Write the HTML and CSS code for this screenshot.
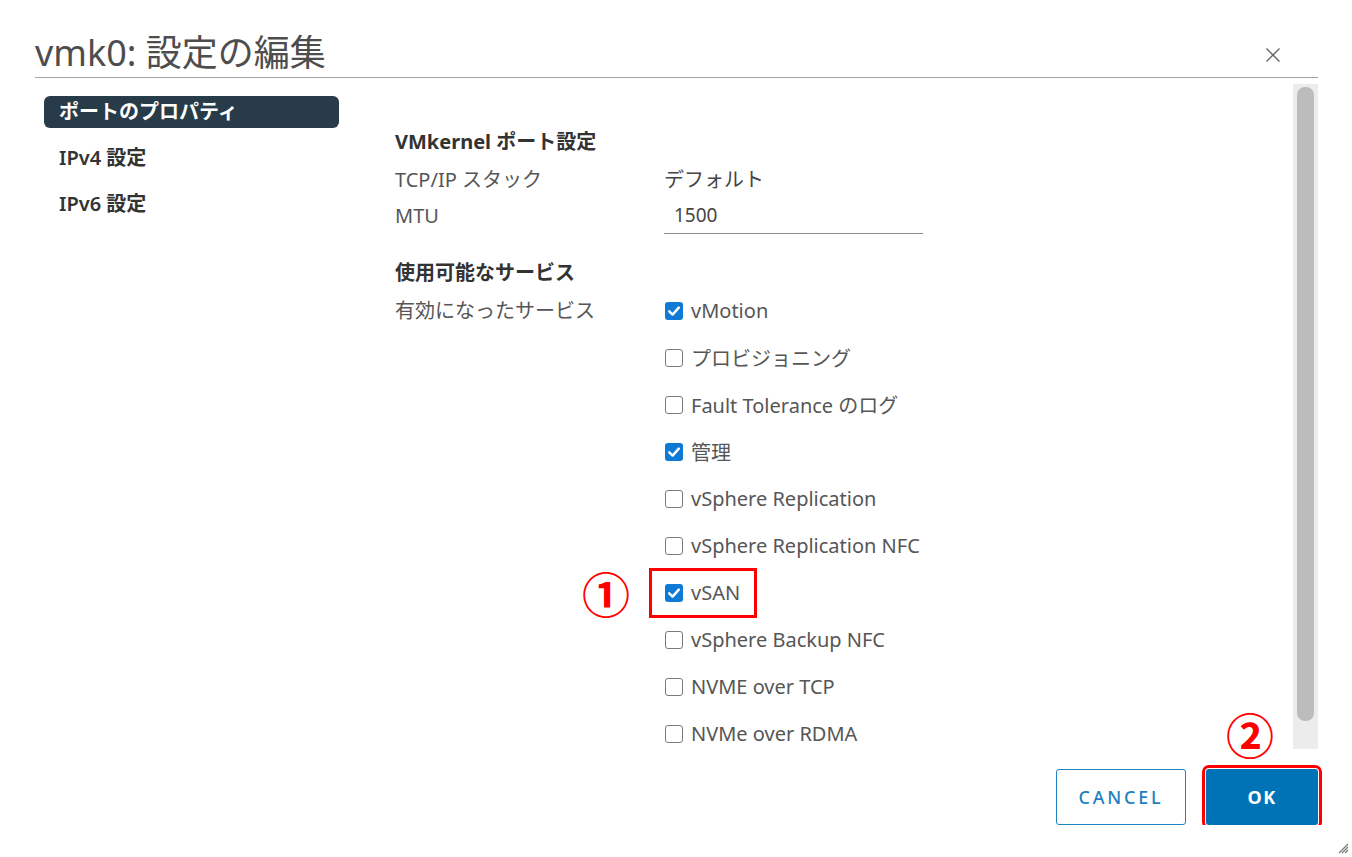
FILE: index.html
```html
<!DOCTYPE html>
<html>
    <head>
        <meta charset="utf-8">
        <link rel="stylesheet" href="styles.css">
    </head>
    <body>
        <div class="dialog">
            <header class="dlg-head">
                <h1 class="dlg-title">vmk0: 設定の編集</h1>
                <button class="close-btn" title="close">
                    <svg width="16" height="16" viewBox="0 0 16 16"><path d="M1.5 1.5 L14.5 14.5 M14.5 1.5 L1.5 14.5" stroke="#666" stroke-width="1.4" fill="none"/></svg>
                </button>
            </header>

            <div class="dlg-body">
                <nav class="side">
                    <a class="side-item active">ポートのプロパティ</a>
                    <a class="side-item">IPv4 設定</a>
                    <a class="side-item">IPv6 設定</a>
                </nav>

                <section class="content">
                    <h3 class="sec-title">VMkernel ポート設定</h3>
                    <div class="field">
                        <span class="lbl">TCP/IP スタック</span>
                        <span class="val">デフォルト</span>
                    </div>
                    <div class="field">
                        <span class="lbl">MTU</span>
                        <input class="mtu" type="text" value="1500">
                    </div>

                    <h3 class="sec-title sec-gap">使用可能なサービス</h3>
                    <div class="services">
                        <span class="lbl svc-lbl">有効になったサービス</span>
                        <ul class="svc-list">
                            <li class="svc"><span class="cb on"></span>vMotion</li>
                            <li class="svc"><span class="cb"></span>プロビジョニング</li>
                            <li class="svc"><span class="cb"></span>Fault Tolerance のログ</li>
                            <li class="svc"><span class="cb on"></span>管理</li>
                            <li class="svc"><span class="cb"></span>vSphere Replication</li>
                            <li class="svc"><span class="cb"></span>vSphere Replication NFC</li>
                            <li class="svc marked">
                                <span class="step step-1">①</span>
                                <span class="mark-box"></span>
                                <span class="cb on"></span>vSAN
                            </li>
                            <li class="svc"><span class="cb"></span>vSphere Backup NFC</li>
                            <li class="svc"><span class="cb"></span>NVME over TCP</li>
                            <li class="svc"><span class="cb"></span>NVMe over RDMA</li>
                        </ul>
                    </div>
                </section>

                <div class="scroll"><div class="thumb"></div></div>
            </div>

            <footer class="dlg-foot">
                <button class="btn btn-outline">CANCEL</button>
                <div class="ok-wrap">
                    <span class="step step-2">②</span>
                    <button class="btn btn-primary">OK</button>
                </div>
            </footer>
        </div>
        <svg class="grip" width="12" height="12" viewBox="0 0 12 12"><path d="M11 2 L2 11 M11 5 L5 11 M11 8 L8 11" stroke="#777" stroke-width="1.2"/></svg>
    </body>
</html>
```

FILE: styles.css
```css
body {
    margin: 0;
    background: #fff;
    font-family: 'Noto Sans', 'Noto Sans CJK JP', sans-serif;
    color: #565656;
}

.dialog {
    padding: 0 34px 0 35px;
}

.dlg-head {
    height: 78px;
    box-sizing: border-box;
    padding-top: 24px;
    display: flex;
    align-items: center;
    border-bottom: 1px solid #a3a3a3;
}

.dlg-title {
    flex: 1;
    margin: 0;
    font-size: 36px;
    font-weight: 400;
    color: #4d4d4d;
}

.close-btn {
    border: none;
    background: none;
    padding: 0;
    margin: 8px 37px 0 0;
    width: 16px;
    height: 16px;
}

.dlg-body {
    display: flex;
    height: 672px;
}

.side {
    width: 295px;
    margin-left: 9px;
    padding-top: 18px;
    display: flex;
    flex-direction: column;
    gap: 14px;
}

.side-item {
    height: 32px;
    line-height: 32px;
    padding-left: 15px;
    border-radius: 6px;
    font-size: 20px;
    font-weight: 600;
    color: #333;
}

.side-item.active {
    background: #283b48;
    color: #fff;
    font-weight: 700;
}

.content {
    flex: 1;
    margin-left: 56px;
    padding-top: 45px;
}

.sec-title {
    margin: 0;
    height: 37px;
    line-height: 37px;
    font-size: 20px;
    font-weight: 700;
    color: #333;
}

.sec-gap {
    margin-top: 22px;
    height: 33px;
    line-height: 33px;
}

.field {
    display: flex;
    height: 37px;
    align-items: center;
    font-size: 20px;
}

.lbl {
    width: 269px;
    flex-shrink: 0;
}

.val {
    color: #454545;
}

.mtu {
    width: 259px;
    height: 37px;
    box-sizing: border-box;
    border: none;
    border-bottom: 1px solid #8c8c8c;
    padding: 0 0 0 10px;
    font-family: inherit;
    font-size: 19px;
    color: #454545;
    outline: none;
}

.services {
    display: flex;
    margin-top: -2px;
    font-size: 20px;
}

.svc-lbl {
    line-height: 47px;
}

.svc-list {
    list-style: none;
    margin: 0;
    padding: 0;
}

.svc {
    height: 47px;
    display: flex;
    align-items: center;
    gap: 8px;
    padding-left: 1px;
}

.cb {
    width: 18px;
    height: 18px;
    box-sizing: border-box;
    border: 1.5px solid #7a7a7a;
    border-radius: 3px;
    background: #fff;
}

.cb.on {
    border: none;
    background: #0f79d6 url("data:image/svg+xml;utf8,<svg xmlns='http://www.w3.org/2000/svg' width='18' height='18' viewBox='0 0 18 18'><path d='M4.2 9.3 L7.6 12.6 L13.8 5.6' stroke='white' stroke-width='2.4' fill='none' stroke-linecap='round' stroke-linejoin='round'/></svg>") center no-repeat;
}

.marked {
    position: relative;
}

.mark-box {
    position: absolute;
    left: -15px;
    top: -1px;
    width: 108px;
    height: 50px;
    box-sizing: border-box;
    border: 3.5px solid #f00;
}

.step {
    position: absolute;
    color: #f00;
    font-family: 'Noto Sans CJK JP', sans-serif;
    font-size: 48px;
    font-weight: 700;
    line-height: 1;
}

.step-1 {
    left: -82px;
    top: -1px;
}

.scroll {
    width: 25px;
    height: 665px;
    margin-top: 6px;
    background: #ececec;
    box-sizing: border-box;
    padding: 3px 4px 0 4px;
}

.thumb {
    height: 634px;
    border-radius: 8px;
    background: #bcbcbc;
}

.dlg-foot {
    display: flex;
    justify-content: flex-end;
    gap: 20px;
    padding-top: 19px;
}

.ok-wrap {
    position: relative;
}

.step-2 {
    left: 20px;
    top: -60px;
}

.btn {
    height: 56px;
    border-radius: 3px;
    font-family: 'Noto Sans', sans-serif;
    font-size: 18px;
    font-weight: 500;
    letter-spacing: 2.8px;
    cursor: pointer;
}

.btn-outline {
    width: 130px;
    background: #fff;
    border: 1.5px solid #1f83c0;
    color: #1f7fbd;
}

.btn-primary {
    width: 112px;
    background: #0072b6;
    border: none;
    color: #fff;
    font-weight: 700;
    letter-spacing: 1.5px;
    outline: 3.5px solid #f00;
    outline-offset: 1px;
}

.grip {
    position: absolute;
    left: 1337px;
    top: 842px;
}
```
